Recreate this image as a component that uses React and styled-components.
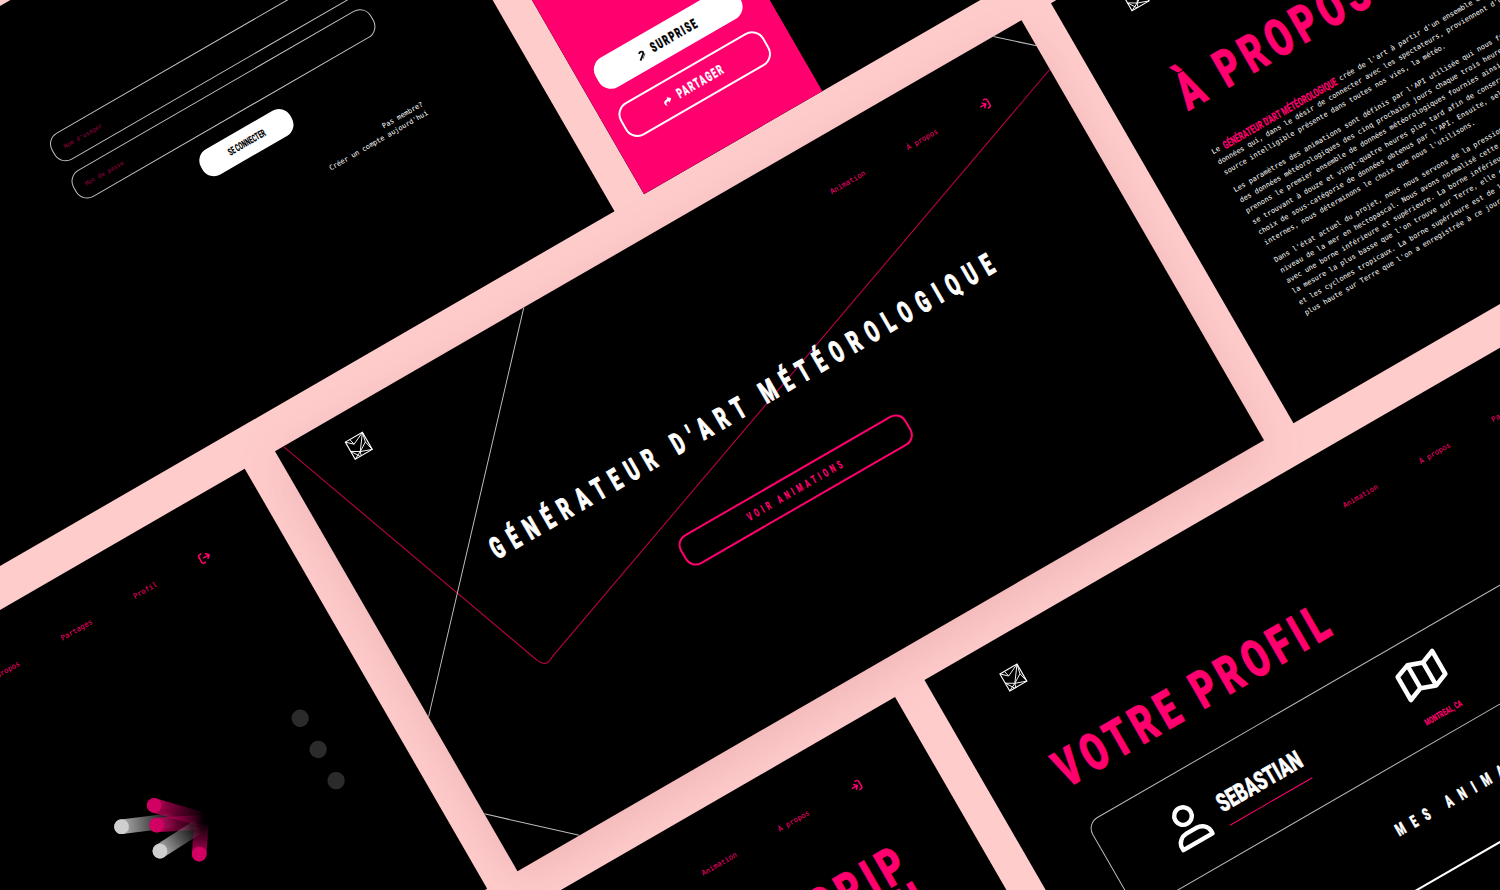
import React, { useLayoutEffect, useRef, useState } from "react";
import styled, { createGlobalStyle, css } from "styled-components";

const PINK = "#ff006e";

const GlobalStyle = createGlobalStyle`
  html, body { margin: 0; padding: 0; background: #ffcccc; overflow: hidden; }
  * { box-sizing: border-box; }
`;

const Page = styled.main`
  position: relative;
  width: 1500px;
  height: 890px;
  overflow: hidden;
  background: #ffcccc;
`;

/* The wall of screens, tilted as one sheet around the page's corner. */
const Wall = styled.div`
  display: flex;
  flex-direction: column;
  gap: 38.2px;
  width: 2656px;
  transform-origin: 0 0;
  transform: rotate(-30deg) translate(-884.4px, 5.2px);
`;

const Row = styled.div`
  display: flex;
  gap: 34.3px;
  margin-left: ${(p) => (p.$shift ? "448.6px" : "0")};
`;

const Screen = styled.section`
  position: relative;
  z-index: ${(p) => (p.$raised ? 0 : 1)};
  flex: none;
  display: flex;
  flex-direction: column;
  width: 862.3px;
  height: 484.8px;
  overflow: hidden;
  background: #000;
  box-shadow: ${(p) => (p.$raised ? "-4px 12px 50px rgba(160, 70, 75, 0.17)" : "none")};
`;

const mono = css`
  font-family: "DejaVu Sans Mono", monospace;
  font-size: 7.1px;
`;

/* Condensed lettering: the text is squeezed to its set width. */
const FitBox = styled.span`
  display: inline-block;
  flex: none;
  vertical-align: top;
  width: ${(p) => p.$w}px;
  height: ${(p) => p.$h}px;
  line-height: ${(p) => p.$h}px;
  margin: ${(p) => p.$m || "0"};
  font-family: Roboto, "Liberation Sans", sans-serif;
  font-weight: ${(p) => p.$weight || 700};
  font-size: ${(p) => p.$size}px;
  letter-spacing: ${(p) => p.$ls || 0}em;
  color: ${(p) => p.$color || "#fff"};
  -webkit-text-stroke: ${(p) => p.$stroke || 0}px ${(p) => p.$color || "#fff"};
  white-space: nowrap;
`;
const FitInk = styled.span`
  display: inline-block;
  transform-origin: 0 50%;
`;

function Fit({ w, h, size, ls = 0, color, m, weight, stroke, children }) {
  const ref = useRef(null);
  const [k, setK] = useState(1);
  useLayoutEffect(() => {
    setK(w / (ref.current.offsetWidth - ls * size));
  }, [w, ls, size]);
  return (
    <FitBox $w={w} $h={h} $size={size} $ls={ls} $color={color} $m={m} $weight={weight} $stroke={stroke}>
      <FitInk ref={ref} style={{ transform: `scaleX(${k})` }}>{children}</FitInk>
    </FitBox>
  );
}

const HeaderBar = styled.header`
  display: flex;
  justify-content: space-between;
  align-items: flex-start;
  flex: none;
  height: 70px;
  padding: ${(p) => 27 + p.$dy}px ${(p) => 68.1 + p.$dx}px 0 ${(p) => 65.6 + p.$lx}px;
`;
const Nav = styled.nav`
  ${mono}
  display: flex;
  align-items: center;
  gap: 48.5px;
  height: 14px;
  margin-top: 20.3px;
  font-size: 7.3px;
  line-height: 14px;
  color: ${PINK};
`;
const LogoMark = styled.svg`
  display: block;
  width: 20.5px;
  height: 20.5px;
  flex: none;
  overflow: visible;
  fill: none;
  stroke: #fff;
  stroke-width: 4.2;
`;
const NavIcon = styled.svg`
  display: block;
  width: 11.5px;
  height: 11.5px;
  overflow: visible;
  fill: none;
  stroke: ${PINK};
  stroke-width: 1.6;
`;

function Logo() {
  return (
    <LogoMark viewBox="0 0 100 100">
      <path strokeWidth="5.5" d="M2 2H98V98H2Z" />
      <path d="M2 2L34 32L98 2M27 2L34 32M98 2L87 50L98 98M87 50L42 78L98 98M98 2L42 78M42 78L2 98M2 54L42 78L36 98M2 54L30 98" />
    </LogoMark>
  );
}
const LogIn = () => (
  <NavIcon viewBox="0 0 12 12">
    <path d="M0.8 6H7.2M4.2 2.800L7.400 6L4.200 9.200M7 1H8.400Q10.800 1 10.800 3.200V4.400M10.800 7.600V8.800Q10.800 11 8.400 11H7M10.800 4V8" />
  </NavIcon>
);
const LogOut = () => (
  <NavIcon viewBox="0 0 12 12">
    <path d="M4.400 6H11.400M8.400 2.800L11.600 6L8.400 9.200M5 1H3.200Q1 1 1 3.200V8.800Q1 11 3.200 11H5" />
  </NavIcon>
);

function Header({ items, out, dx = 0, dy = 0, lx = 0 }) {
  return (
    <HeaderBar $dx={dx} $dy={dy} $lx={lx}>
      <Logo />
      <Nav>
        {items.map((t) => <span key={t}>{t}</span>)}
        {out ? <LogOut /> : <LogIn />}
      </Nav>
    </HeaderBar>
  );
}

/* Login */
const LoginForm = styled.div`
  display: flex;
  flex-direction: column;
  align-items: center;
  width: 344px;
  margin: 137.8px 0 0 405.9px;
`;
const Field = styled.div`
  ${mono}
  width: 100%;
  height: 31px;
  margin-bottom: 12.4px;
  padding-left: 11px;
  border: 1px solid #c4c4c4;
  border-radius: 13px;
  font-size: 6px;
  line-height: 29px;
  color: #9c0042;
`;
const Submit = styled.div`
  display: flex;
  justify-content: center;
  align-items: center;
  width: 103px;
  height: 29px;
  margin-top: 2.6px;
  border-radius: 13px;
  background: #fff;
`;
const SignupHint = styled.p`
  ${mono}
  align-self: flex-end;
  margin: 36.2px 0 0;
  font-size: 6.95px;
  line-height: 9.7px;
  text-align: right;
  color: #fff;
`;

/* Generator controls */
const Panel = styled.aside`
  display: flex;
  flex-direction: column;
  gap: 16.5px;
  width: 205.8px;
  height: 100%;
  padding: 344.6px 0 0 15.9px;
  background: ${PINK};
`;
const PanelButton = styled.div`
  display: flex;
  align-items: center;
  justify-content: center;
  gap: 6px;
  flex: none;
  width: ${(p) => (p.$filled ? 164 : 166)}px;
  height: ${(p) => (p.$filled ? 34.5 : 38)}px;
  margin-left: ${(p) => (p.$filled ? 1 : 0)}px;
  padding-right: 4px;
  border: 2.4px solid #fff;
  border-radius: 14px;
  background: ${(p) => (p.$filled ? "#fff" : "transparent")};
`;
const SmallIcon = styled.svg`
  display: block;
  width: ${(p) => p.$size}px;
  height: ${(p) => p.$size}px;
  margin: 4px ${(p) => 10 - p.$size}px 0 0;
  overflow: visible;
`;

/* Home */
const Lines = styled.svg`
  position: absolute;
  inset: 0;
  width: 862.3px;
  height: 484.8px;
  fill: none;
`;
const OutlineButton = styled.div`
  display: flex;
  align-items: center;
  justify-content: center;
  width: 261px;
  height: 34.5px;
  margin: 67px 0 0 301.7px;
  padding-right: 3px;
  border: 2.3px solid ${PINK};
  border-radius: 12px;
`;

/* About */
const Article = styled.article`
  ${mono}
  margin: 39.3px 0 0 64.8px;
  font-size: 7.07px;
  line-height: 12.2px;
  white-space: nowrap;
  color: #fff;
`;
const Paragraph = styled.p`
  margin: 0 0 7.5px;
`;

/* Profile */
const Card = styled.div`
  display: flex;
  flex: none;
  width: 725px;
  height: 103.4px;
  margin: 36.7px 0 0 67.6px;
  padding-left: 68.7px;
  border: 1px solid #b8b8b8;
  border-radius: 13px;
`;
const PersonIcon = styled.svg`
  display: block;
  width: 38px;
  height: 43px;
  margin-top: 29.4px;
  overflow: visible;
  fill: none;
  stroke: #fff;
  stroke-width: 4.4;
  stroke-linejoin: round;
`;
const UserName = styled.div`
  height: 44px;
  width: 94.5px;
  margin: 29px 0 0 16.8px;
  border-bottom: 1.4px solid ${PINK};
`;
const Place = styled.div`
  display: flex;
  flex-direction: column;
  align-items: center;
  margin: 20px 0 0 122px;
`;
const MapIcon = styled.svg`
  display: block;
  width: 47.5px;
  height: 37px;
  overflow: visible;
  fill: none;
  stroke: #fff;
  stroke-width: 4.6;
  stroke-linejoin: round;
`;
const Divider = styled.div`
  flex: none;
  width: 725px;
  height: 1.4px;
  margin: 50.6px 0 0 68px;
  background: #fff;
`;

/* Animation viewer */
const Viewer = styled.svg`
  position: absolute;
  inset: 0;
  width: 862.3px;
  height: 484.8px;
`;

const SignupTitle = styled.h1`
  display: flex;
  flex-direction: column;
  align-items: flex-end;
  margin: 55px 76px 0 0;
`;

const TRAILS = [
  { id: "a", x: -78.4, y: 1.6, tx: -24, ty: -5, c: "#cfcfcf" },
  { id: "b", x: -45.7, y: -19.7, tx: 4, ty: -5, c: "#d10062" },
  { id: "c", x: -43.3, y: 0, tx: 4, ty: -3, c: "#d10062" },
  { id: "d", x: -40, y: 26, tx: -1, ty: 1, c: "#cfcfcf" },
  { id: "e", x: -0.7, y: 29, tx: 1.5, ty: -3, c: "#d10062" },
];

export default function App() {
  return (
    <Page>
      <GlobalStyle />
      <Wall>
        <Row $shift>
          <Screen>
            <LoginForm>
              <Field>Nom d'usager</Field>
              <Field>Mot de passe</Field>
              <Submit>
                <Fit w={41.5} h={14} size={10.3} weight={900} color="#000">SE CONNECTER</Fit>
              </Submit>
              <SignupHint>Pas membre?<br />Créer un compte aujourd'hui</SignupHint>
            </LoginForm>
          </Screen>
          <Screen>
            <Panel>
              <PanelButton $filled>
                <SmallIcon $size={10} viewBox="0 0 10 10" fill="none" stroke="#111" strokeWidth="1.9">
                  <path d="M0.8 8.6L5.600 4.800Q8.600 2.400 6 1.200Q4.400 0.600 2.800 1.800" />
                  <path strokeWidth="1" stroke="#666" d="M4 8.200L8.400 4.400" />
                </SmallIcon>
                <Fit w={51.5} h={18} size={13.8} ls={0.18} weight={900} stroke={0.3} color="#000">SURPRISE</Fit>
              </PanelButton>
              <PanelButton>
                <SmallIcon $size={8.5} viewBox="0 0 512 512" fill="#fff">
                  <path d="M503.700 189.800L327.700 37.900C312.300 24.500 288 35.300 288 56v80.100C127.400 137.900 0 170.100 0 322.300c0 61.400 39.600 122.300 83.300 154.100 13.700 9.900 33.100-2.500 28.100-18.600C66.100 312.800 132.900 274.300 288 272.100V360c0 20.700 24.300 31.500 39.700 18.200l176-152c11.100-9.600 11.100-26.800 0-36.400z" />
                </SmallIcon>
                <Fit w={51.5} h={18} size={13.8} ls={0.18} weight={900} stroke={0.2}>PARTAGER</Fit>
              </PanelButton>
            </Panel>
          </Screen>
        </Row>

        <Row>
          <Screen>
            <Header items={["Animation", "À propos", "Partages", "Profil"]} out dx={6} dy={2} />
            <Viewer viewBox="0 0 862.3 484.8">
              <g fill="#2b2b2b">
                <circle cx="785.2" cy="243.9" r="8.700" />
                <circle cx="785.2" cy="279.9" r="8.700" />
                <circle cx="785.2" cy="315.9" r="8.700" />
              </g>
              <g transform="translate(645 286.300) rotate(30)" strokeLinecap="round">
                {TRAILS.map((t) => (
                  <g key={t.id}>
                    <linearGradient id={t.id} gradientUnits="userSpaceOnUse" x1={t.x} y1={t.y} x2={t.tx} y2={t.ty}>
                      <stop offset="0" stopColor={t.c} stopOpacity="0.85" />
                      <stop offset="0.5" stopColor={t.c} stopOpacity="0.4" />
                      <stop offset="1" stopColor={t.c} stopOpacity="0" />
                    </linearGradient>
                    <line x1={t.x} y1={t.y} x2={t.tx} y2={t.ty} stroke={`url(#${t.id})`} strokeWidth="14.600" />
                    <circle cx={t.x} cy={t.y} r="7.400" fill={t.c} />
                  </g>
                ))}
              </g>
            </Viewer>
          </Screen>
          <Screen $raised>
            <Lines viewBox="0 0 862.3 484.8">
              <path stroke="#b80047" strokeWidth="1.1" d="M9.500 0L122 311Q126 323.500 136.500 317L862.300 56.600" />
              <path stroke="#bcbcbc" strokeWidth="1" d="M287.300 0L0 307M0 418.800L71.400 484.800M829.300 0L862.300 29.800" />
            </Lines>
            <Header items={["Animation", "À propos"]} />
            <Fit w={577} h={30} size={30} ls={0.46} weight={900} stroke={0.9} m="110px 0 0 138.6px">GÉNÉRATEUR D'ART MÉTÉOROLOGIQUE</Fit>
            <OutlineButton>
              <Fit w={108.5} h={16} size={11.6} ls={0.5} weight={900} color={PINK}>VOIR ANIMATIONS</Fit>
            </OutlineButton>
          </Screen>
          <Screen>
            <Header items={["Animation", "À propos"]} />
            <Fit w={215} h={40} size={52} ls={0.16} weight={900} stroke={0.8} color={PINK} m="54.7px 0 0 64.6px">À PROPOS</Fit>
            <Article>
              <Paragraph>
                Le <Fit w={130} h={12} size={11.5} weight={900} color={PINK}>GÉNÉRATEUR D'ART MÉTÉOROLOGIQUE</Fit> crée de l'art à partir d'un ensemble de<br />
                données qui, dans le désir de connecter avec les spectateurs, proviennent d'une<br />
                source intelligible présente dans toutes nos vies, la météo.
              </Paragraph>
              <Paragraph>
                Les paramètres des animations sont définis par l'API utilisée qui nous fournit<br />
                des données météorologiques des cinq prochains jours chaque trois heures. Nous<br />
                prenons le premier ensemble de données météorologiques fournies ainsi que ceux<br />
                se trouvant à douze et vingt-quatre heures plus tard afin de conserver un<br />
                choix de sous-catégorie de données obtenus par l'API. Ensuite, selon des calculs<br />
                internes, nous déterminons le choix que nous l'utilisons.
              </Paragraph>
              <Paragraph>
                Dans l'état actuel du projet, nous nous servons de la pression au<br />
                niveau de la mer en hectopascal. Nous avons normalisé cette donnée<br />
                avec une borne inférieure et supérieure. La borne inférieure est<br />
                la mesure la plus basse que l'on trouve sur Terre, elle est<br />
                et les cyclones tropicaux. La borne supérieure est de la<br />
                plus haute sur Terre que l'on a enregistrée à ce jour.
              </Paragraph>
            </Article>
          </Screen>
        </Row>

        <Row $shift>
          <Screen>
            <Header items={["Animation", "À propos"]} dx={4} dy={3} />
            <SignupTitle>
              <Fit w={180} h={42} size={52} ls={0.16} weight={900} stroke={0.8} color={PINK}>INSCRIP</Fit>
              <Fit w={100} h={42} size={52} ls={0.16} weight={900} stroke={0.8} color={PINK}>TION</Fit>
            </SignupTitle>
          </Screen>
          <Screen>
            <Header items={["Animation", "À propos", "Partages", "Profil"]} out dx={3} dy={5} lx={2} />
            <Fit w={308} h={40} size={52} ls={0.16} weight={900} stroke={0.8} color={PINK} m="58.5px 0 0 69px">VOTRE PROFIL</Fit>
            <Card>
              <PersonIcon viewBox="0 0 38 43">
                <circle cx="18.900" cy="11" r="8.800" />
                <path d="M2.200 40.800V38C2.200 32 8 28 13 28H25C30 28 35.800 32 35.800 38V40.800Z" />
              </PersonIcon>
              <UserName>
                <Fit w={94.5} h={40} size={25.6} weight={900} stroke={0.5}>SEBASTIAN</Fit>
              </UserName>
              <Place>
                <MapIcon viewBox="0 0 47.5 37">
                  <path d="M2.300 8L16.500 2.700L31.500 8L45.200 2.700V29L31.500 34.500L16.500 29L2.300 34.500ZM16.500 2.700V29M31.500 8V34.500" />
                </MapIcon>
                <Fit w={42} h={12} size={9.3} weight={900} color={PINK} m="18.4px 0 0">MONTREAL, CA</Fit>
              </Place>
            </Card>
            <Fit w={195} h={20} size={17} ls={0.8} weight={900} stroke={0.4} m="48px 0 0 333px">MES ANIMATIONS</Fit>
            <Divider />
          </Screen>
        </Row>
      </Wall>
    </Page>
  );
}
